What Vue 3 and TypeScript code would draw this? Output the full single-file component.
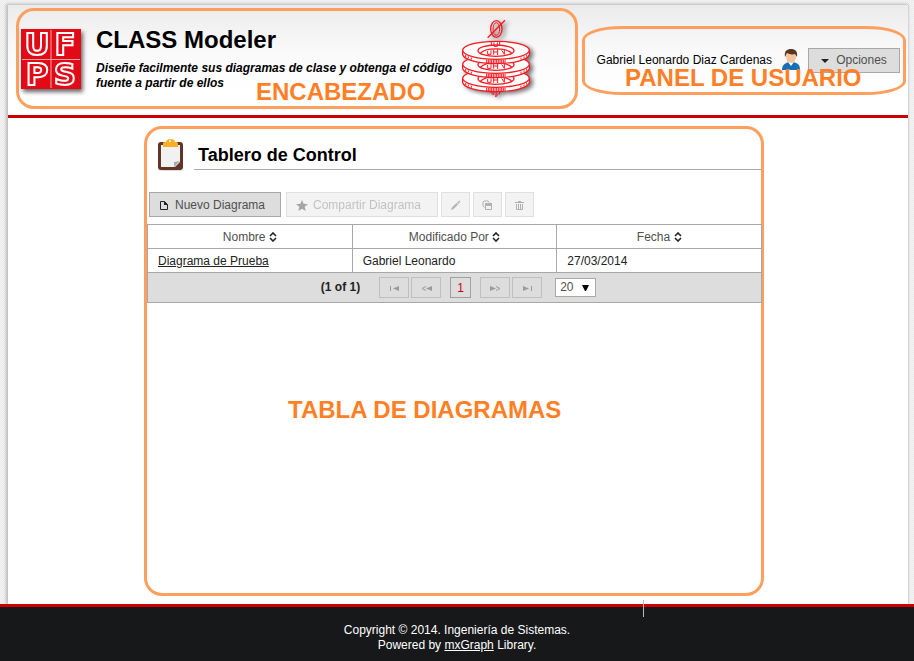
<script setup lang="ts">
import { ref } from 'vue'

interface Diagram {
  name: string
  modifiedBy: string
  date: string
}

const columns: string[] = ['Nombre', 'Modificado Por', 'Fecha']
const diagrams = ref<Diagram[]>([
  { name: 'Diagrama de Prueba', modifiedBy: 'Gabriel Leonardo', date: '27/03/2014' },
])
const pageSize = ref<number>(20)
const ticks: number[] = [-28, -23, -18, -13, -8, -3, 2, 7, 12, 17, 22, 27]
const ringOffsets: number[] = [84, 42, 0]
</script>

<template>
  <div class="screen">
    <div class="page">
      <header class="header">
        <section class="brand frame">
          <svg class="logo" viewBox="0 0 60 60" role="img" aria-label="UFPS">
            <rect width="60" height="60" fill="#e20a17" />
            <path d="M30 1V59M1 30.500H59" stroke="#f6a5a5" stroke-width="1" />
            <g class="logo-letters">
              <text x="16" y="26">U</text>
              <text x="44" y="26">F</text>
              <text x="16" y="56">P</text>
              <text x="44" y="56">S</text>
            </g>
          </svg>
          <div class="brand-text">
            <h1>CLASS Modeler</h1>
            <p>Diseñe facilmente sus diagramas de clase y obtenga el código fuente a partir de ellos</p>
          </div>
          <svg class="rings" viewBox="0 0 222 240" aria-hidden="true">
            <g fill="none" stroke="#f81820" stroke-width="4">
              <path d="M88 205l6 22M98 210v18M108 208l-4 26 8-10M118 208l-3 18" stroke-width="3" />
              <g v-for="dy in ringOffsets" :key="dy" :transform="`translate(0 ${dy})`">
                <path d="M5 94V106C5 121 50 134 105 134S205 121 205 106V94Z" fill="#fff" />
                <ellipse cx="105" cy="94" rx="100" ry="27" fill="#fff" />
                <ellipse cx="105" cy="95" rx="54" ry="17" fill="#fff" />
                <path d="M58 103C72 85 138 85 152 103" />
                <path d="M80 96v10h10v-12M98 92v15M98 99h12M110 90v18M122 94l8 12v-14" stroke-width="3" />
                <path v-for="t in ticks" :key="t" :d="`M${105 + t} 122v10`" stroke-width="3" />
                <path d="M14 108v6M22 112v6M31 116v6M180 116v6M189 112v6M197 107v6" stroke-width="3" />
              </g>
              <path d="M91 68v10M99 70v12h10V70M116 68v12" stroke-width="3" />
              <ellipse cx="106" cy="30" rx="17" ry="25" />
              <ellipse cx="106" cy="30" rx="10" ry="19" stroke-width="3" />
              <path d="M80 56L132 4" />
            </g>
          </svg>
          <strong class="label brand-label">ENCABEZADO</strong>
        </section>

        <section class="user frame">
          <span>Gabriel Leonardo Diaz Cardenas</span>
          <svg class="avatar" viewBox="0 0 20 22" aria-hidden="true">
            <path d="M1 21C1 16 4 14 8 13H12C17 14 19 16 19 21Z" fill="#1470b8" />
            <path d="M7 13L10 17L13 13Z" fill="#fff" />
            <ellipse cx="10" cy="8" rx="5" ry="6" fill="#f3c49c" />
            <path d="M4 8C3 2 6 0 10 0S17 2 16 8L14 5C11 6 8 5 6 4Z" fill="#5c3422" />
          </svg>
          <button class="btn options" type="button">
            <svg width="8" height="4" viewBox="0 0 8 4" aria-hidden="true"><path d="M0 0H8L4 4Z" fill="#222" /></svg>
            Opciones
          </button>
          <strong class="label user-label">PANEL DE USUARIO</strong>
        </section>
      </header>

      <main class="main">
        <section class="workspace frame">
          <div class="heading">
            <svg class="clipboard" viewBox="0 0 28 34" aria-hidden="true">
              <ellipse cx="14" cy="32" rx="13" ry="1" fill="#ddd" />
              <rect x="1" y="4" width="25" height="28" rx="3" fill="#633528" />
              <path d="M4 7H23V24L18 29H4Z" fill="#f1f1f1" />
              <path d="M23 23L17 29V24Z" fill="#aaa" />
              <path d="M6 9V5C6 4 8 4 9 4C9 0 18 0 18 4C20 4 21 4 21 6V9Z" fill="#f9b024" />
              <circle cx="13" cy="3" r="1" fill="#fff" />
            </svg>
            <h2>Tablero de Control</h2>
          </div>

          <div class="toolbar">
            <button class="btn new" type="button">
              <svg width="8" height="9" viewBox="0 0 8 9" aria-hidden="true"><path d="M0.500 0.500H4.500L7.500 3.500V8.500H0.500Z" fill="none" stroke="#222" /><path d="M4 0V4H8Z" fill="#222" /></svg>
              Nuevo Diagrama
            </button>
            <button class="btn share" type="button" disabled>
              <svg width="12" height="11" viewBox="0 0 12 11" aria-hidden="true"><path d="M6 0L7.600 3.800L12 4.200L8.700 6.800L9.700 11L6 8.700L2.300 11L3.300 6.800L0 4.200L4.400 3.800Z" fill="#000" /></svg>
              Compartir Diagrama
            </button>
            <button class="btn tool" type="button" aria-label="Editar" disabled>
              <svg width="11" height="11" viewBox="0 0 11 11" aria-hidden="true"><path d="M1 10L2 7.500L6.500 3L8 4.500L3.500 9Z" fill="#222" /><path d="M7.500 2L9 3.500M9 1L10 2" stroke="#222" stroke-width="1.500" /></svg>
            </button>
            <button class="btn tool" type="button" aria-label="Copiar" disabled>
              <svg width="11" height="11" viewBox="0 0 11 11" aria-hidden="true"><path d="M2.500 7.500L1 6V2L2 1H6L7.500 2.500" fill="none" stroke="#222" /><path d="M3.500 3.500H9.500V9.500H3.500Z" fill="none" stroke="#222" /><path d="M3 3H10V6H3Z" fill="#222" /></svg>
            </button>
            <button class="btn tool" type="button" aria-label="Eliminar" disabled>
              <svg width="11" height="11" viewBox="0 0 11 11" aria-hidden="true"><path d="M4 1.500H7M1 2.500H10" stroke="#222" /><path d="M2.500 4V9.500H8.500V4M4.500 4V9M6.500 4V9" fill="none" stroke="#222" /></svg>
            </button>
          </div>

          <div class="listing">
            <table class="grid">
              <thead>
                <tr>
                  <th v-for="column in columns" :key="column" scope="col">
                    {{ column }}
                    <svg width="8" height="10" viewBox="0 0 8 10" aria-hidden="true"><path d="M1 4L4 1L7 4M1 6L4 9L7 6" fill="none" stroke="#222" stroke-width="1.600" /></svg>
                  </th>
                </tr>
              </thead>
              <tbody>
                <tr v-for="diagram in diagrams" :key="diagram.name">
                  <td><a href="#">{{ diagram.name }}</a></td>
                  <td>{{ diagram.modifiedBy }}</td>
                  <td>{{ diagram.date }}</td>
                </tr>
              </tbody>
            </table>

            <nav class="paginator" aria-label="Paginación">
              <strong>(1 of 1)</strong>
              <div class="pages">
                <span class="pair">
                  <button class="step" type="button" aria-label="Primera página" disabled>
                    <svg width="9" height="5" viewBox="0 0 9 5" aria-hidden="true"><path d="M0.500 0V5" stroke="#222" /><path d="M9 0V5L3 2.500Z" fill="#222" /></svg>
                  </button>
                  <button class="step" type="button" aria-label="Página anterior" disabled>
                    <svg width="11" height="5" viewBox="0 0 11 5" aria-hidden="true"><path d="M5 0.500L1 2.500L5 4.500" fill="none" stroke="#222" /><path d="M11 0V5L5 2.500Z" fill="#222" /></svg>
                  </button>
                </span>
                <button class="current" type="button">1</button>
                <span class="pair">
                  <button class="step" type="button" aria-label="Página siguiente" disabled>
                    <svg width="11" height="5" viewBox="0 0 11 5" aria-hidden="true"><path d="M6 0.500L10 2.500L6 4.500" fill="none" stroke="#222" /><path d="M0 0V5L6 2.500Z" fill="#222" /></svg>
                  </button>
                  <button class="step" type="button" aria-label="Última página" disabled>
                    <svg width="9" height="5" viewBox="0 0 9 5" aria-hidden="true"><path d="M8.500 0V5" stroke="#222" /><path d="M0 0V5L6 2.500Z" fill="#222" /></svg>
                  </button>
                </span>
              </div>
              <div class="size">
                <select v-model="pageSize" aria-label="Filas por página">
                  <option :value="20">20</option>
                </select>
                <svg width="7" height="6" viewBox="0 0 7 6" aria-hidden="true"><path d="M0 0H7L4 6H3Z" fill="#000" /></svg>
              </div>
            </nav>
          </div>

          <strong class="label table-label">TABLA DE DIAGRAMAS</strong>
        </section>
      </main>
    </div>

    <footer class="footer">
      <p>Copyright © 2014. Ingeniería de Sistemas.</p>
      <p>Powered by <a href="#">mxGraph</a> Library.</p>
    </footer>
  </div>
</template>

<style>
body {
  margin: 0;
}
</style>

<style scoped>
.screen {
  display: flex;
  flex-direction: column;
  min-height: 100vh;
  background: repeating-conic-gradient(#ebebeb 0 25%, #f4f4f4 0 50%) 0 0 / 2px 2px;
  color: #000;
  font: 12px/15px Arial, "Liberation Sans", sans-serif;
}
h1,
h2,
p {
  margin: 0;
}
svg {
  flex: none;
}
.page {
  display: flex;
  flex: 1;
  flex-direction: column;
  margin: 5px 6px 0 8px;
  background: #fff;
  box-shadow: 0 0 1px #bbb, -1px 0 3px 1px #bbb;
}
.frame {
  position: relative;
  box-sizing: border-box;
  border: 3px solid #ff9f5e;
  border-radius: 18px;
}
.label {
  color: #ff7f27;
  font-size: 24px;
  line-height: 28px;
  white-space: nowrap;
}
.header {
  display: flex;
  gap: 4px;
  align-items: center;
  padding: 3px 2px 6px 8px;
  border-bottom: 3px solid #c00;
  background: linear-gradient(#ebebeb, #f9f9f9 40%, #fff 80%);
}
.brand {
  display: flex;
  flex: 0 1 562px;
  align-items: center;
  height: 101px;
  padding-left: 2px;
}
.logo {
  width: 60px;
  height: 60px;
  overflow: visible;
  filter: drop-shadow(2px 3px 2px #666);
}
.logo-letters {
  fill: #e20a17;
  stroke: #fff;
  stroke-width: 2px;
  font: bold 31px "DejaVu Sans", sans-serif;
  text-anchor: middle;
}
.brand-text {
  width: 365px;
  padding: 0 0 1px 15px;
}
.brand-text h1 {
  margin-bottom: 7px;
  font-size: 24px;
  line-height: 28px;
}
.brand-text p {
  font-style: italic;
  font-weight: bold;
}
.rings {
  width: 74px;
  height: 80px;
  filter: drop-shadow(3px 2px 2px #777);
}
.brand-label {
  position: absolute;
  top: 67px;
  left: 237px;
}
.user {
  display: flex;
  flex: 1;
  align-items: center;
  justify-content: flex-end;
  height: 69px;
  margin-top: 3px;
  padding-right: 3px;
  border-radius: 40px / 14px;
  white-space: nowrap;
}
.avatar {
  width: 20px;
  height: 22px;
  margin: 0 7px 0 9px;
}
.user-label {
  position: absolute;
  top: 35px;
  left: 40px;
}
.btn {
  display: flex;
  box-sizing: border-box;
  align-items: center;
  justify-content: center;
  height: 25px;
  padding: 1px 0 0;
  border: 1px solid #a8a8a8;
  background: #ddd;
  color: #4f4f4f;
  font: inherit;
  white-space: nowrap;
}
.btn:disabled,
.step:disabled {
  opacity: 0.35;
}
.options {
  gap: 7px;
  width: 92px;
}
.main {
  display: flex;
  flex: 1;
  justify-content: center;
  padding: 8px 8px 8px 0;
}
.workspace {
  width: 100%;
  max-width: 620px;
}
.heading {
  display: flex;
  gap: 9px;
  padding: 9px 0 0 10px;
}
.clipboard {
  width: 28px;
  height: 34px;
}
.heading h2 {
  flex: 1;
  height: 31px;
  padding-left: 4px;
  border-bottom: 1px solid #a8a8a8;
  font-size: 18px;
  line-height: 34px;
}
.toolbar {
  display: flex;
  gap: 3px;
  padding: 20px 0 7px 2px;
}
.new {
  gap: 7px;
  justify-content: flex-start;
  width: 132px;
  margin-right: 2px;
  padding-left: 10px;
}
.share {
  gap: 5px;
  justify-content: flex-start;
  width: 152px;
  padding-left: 9px;
}
.tool {
  width: 29px;
}
.listing {
  margin-right: -1px;
}
.grid {
  width: 100%;
  border-collapse: collapse;
  table-layout: fixed;
}
.grid th,
.grid td {
  height: 22px;
  padding: 1px 10px 0;
  border: 1px solid #a8a8a8;
  color: #222;
  text-align: left;
}
.grid th {
  color: #4f4f4f;
  font-weight: normal;
  text-align: center;
}
.grid th svg {
  vertical-align: -1px;
}
.grid a {
  color: inherit;
}
.paginator {
  display: flex;
  align-items: center;
  justify-content: center;
  height: 29px;
  padding-left: 8px;
  border: 1px solid #a8a8a8;
  border-top: 0;
  background: #ddd;
  color: #222;
}
.pages {
  display: flex;
  gap: 9px;
  margin: 0 13px 0 19px;
}
.pair {
  display: flex;
  gap: 2px;
}
.step,
.current {
  display: flex;
  box-sizing: border-box;
  align-items: center;
  justify-content: center;
  width: 30px;
  height: 21px;
  padding: 1px 0 0;
  border: 1px solid #888;
  background: #ddd;
  font: inherit;
}
.current {
  width: 21px;
  border-color: #a0a0a0;
  color: #d00020;
}
.size {
  display: grid;
  align-items: center;
}
.size select,
.size svg {
  grid-area: 1 / 1;
}
.size select {
  width: 41px;
  height: 19px;
  padding: 0 0 0 4px;
  border: 1px solid #a8a8a8;
  border-radius: 0;
  appearance: none;
  background: #fff;
  color: #4f4f4f;
  font: inherit;
}
.size svg {
  justify-self: end;
  margin-right: 7px;
  pointer-events: none;
}
.table-label {
  display: block;
  margin: 93px 0 0 141px;
}
.footer {
  position: relative;
  padding: 16px 0 8px;
  border-top: 3px solid #c00;
  background: #17181a;
  color: #fff;
  text-align: center;
}
.footer::before {
  position: absolute;
  top: -7px;
  left: 643px;
  width: 1px;
  height: 17px;
  background: #bbb;
  content: "";
}
.footer a {
  color: inherit;
}
</style>
